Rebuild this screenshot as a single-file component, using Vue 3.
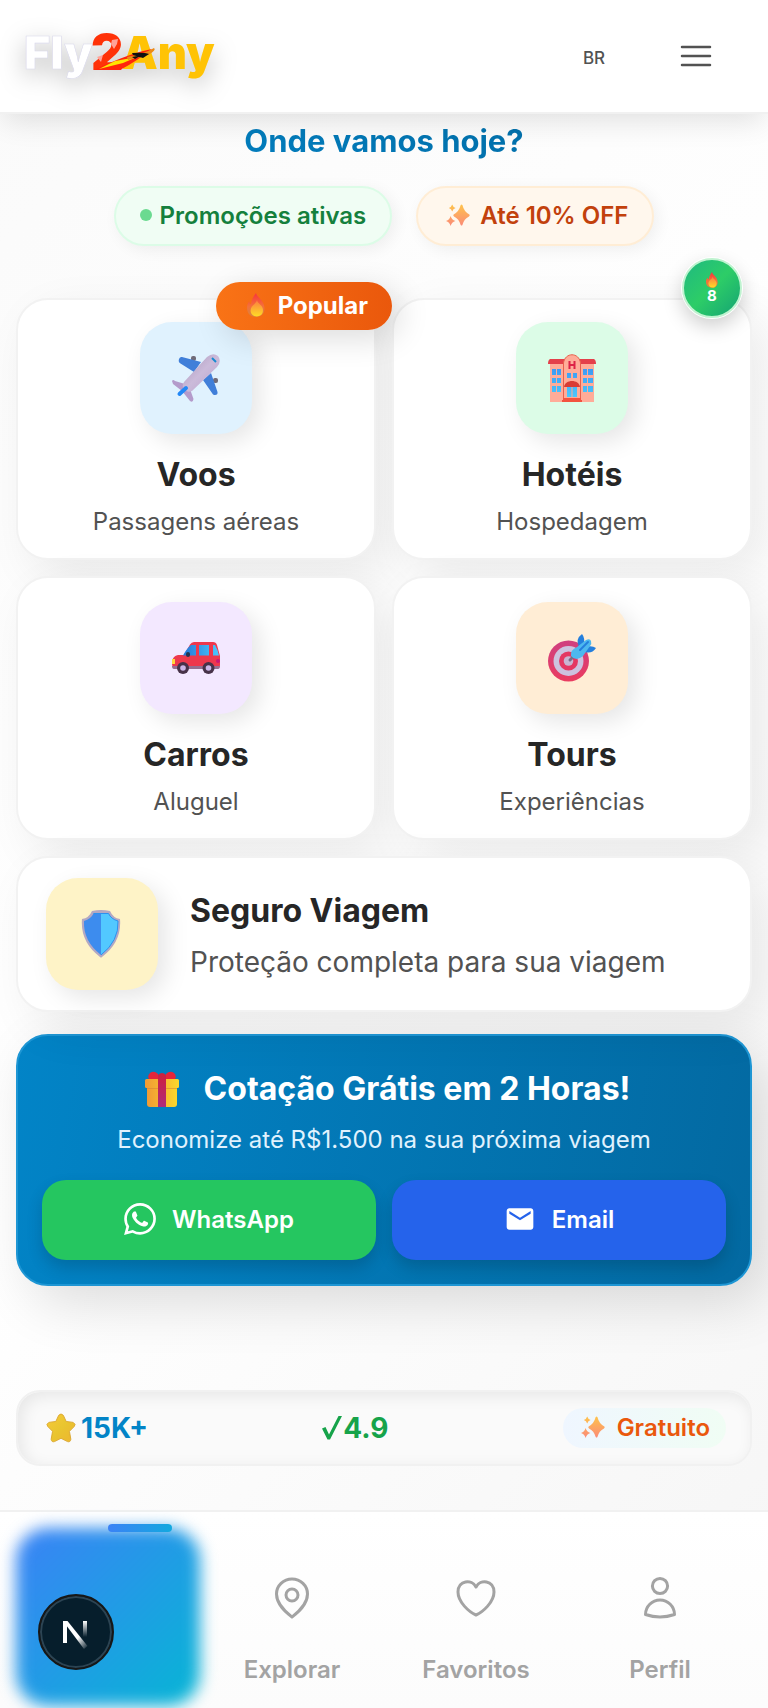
<script setup>
const services = [
  { id: 'plane', title: 'Voos', text: 'Passagens aéreas', tone: 'sky', lead: true },
  { id: 'hotel', title: 'Hotéis', text: 'Hospedagem', tone: 'mint', lead: true },
  { id: 'car', title: 'Carros', text: 'Aluguel', tone: 'lilac', lead: false },
  { id: 'target', title: 'Tours', text: 'Experiências', tone: 'peach', lead: false },
]
</script>

<template>
  <div class="page">
    <svg class="defs" aria-hidden="true">
      <defs>
        <linearGradient id="gSpark" x1="0" y1="0" x2="0" y2="1"><stop offset="0" stop-color="#fec34c" /><stop offset="1" stop-color="#fb8a78" /></linearGradient>
        <linearGradient id="gFlame" x1="0" y1="0" x2="0" y2="1"><stop offset="0" stop-color="#f8343c" /><stop offset="0.55" stop-color="#f4703a" /><stop offset="1" stop-color="#d9843e" /></linearGradient>
        <linearGradient id="gFlameIn" x1="0" y1="0" x2="0" y2="1"><stop offset="0" stop-color="#fb7b40" /><stop offset="1" stop-color="#ffdc26" /></linearGradient>
        <linearGradient id="gBody" x1="0" y1="0" x2="1" y2="1"><stop offset="0" stop-color="#a995b8" /><stop offset="0.5" stop-color="#cbbbda" /><stop offset="1" stop-color="#b9a2cc" /></linearGradient>
        <linearGradient id="gGlass" x1="0" y1="0" x2="1" y2="0"><stop offset="0" stop-color="#2477d8" /><stop offset="1" stop-color="#4cc9fd" /></linearGradient>
        <linearGradient id="gPane" x1="0" y1="0" x2="0" y2="1"><stop offset="0" stop-color="#3b9af5" /><stop offset="1" stop-color="#4cc8fb" /></linearGradient>
        <linearGradient id="gRing" x1="0" y1="0" x2="0" y2="1"><stop offset="0" stop-color="#cf3f80" /><stop offset="1" stop-color="#ea3c60" /></linearGradient>
        <linearGradient id="gBox" x1="0" y1="0" x2="1" y2="0"><stop offset="0" stop-color="#f09a35" /><stop offset="1" stop-color="#fcd72c" /></linearGradient>
        <linearGradient id="gRibbon" x1="0" y1="0" x2="0" y2="1"><stop offset="0" stop-color="#cf213c" /><stop offset="1" stop-color="#ae2b7c" /></linearGradient>
        <linearGradient id="gStar" x1="0" y1="0" x2="1" y2="1"><stop offset="0" stop-color="#f7c93a" /><stop offset="0.5" stop-color="#e9c52f" /><stop offset="1" stop-color="#edb52f" /></linearGradient>
        <linearGradient id="gDiag" x1="0" y1="0" x2="1" y2="1"><stop offset="0.6" stop-color="#fff" /><stop offset="1" stop-color="#fff" stop-opacity="0" /></linearGradient>
        <linearGradient id="gStem" x1="0" y1="0" x2="0" y2="1"><stop offset="0" stop-color="#fff" /><stop offset="1" stop-color="#fff" stop-opacity="0" /></linearGradient>
      </defs>
      <symbol id="sparkles" viewBox="0 0 24 24">
        <path fill="url(#gSpark)" d="M14.7 2Q15.6 1 16.4 2Q18 8.500 23 11.200Q24.4 12.3 23 13.400Q18 15.800 16.4 22Q15.6 23 14.7 22Q13 15.800 8 13.400Q6.600 12.3 8 11.200Q13 8.500 14.7 2ZM6.2 1.500Q7 4.200 9.600 5Q7 5.800 6.2 8.500Q5.400 5.800 2.800 5Q5.400 4.200 6.2 1.500ZM4.600 13Q5.700 16.800 9.400 18Q5.700 19.200 4.6 23Q3.600 19.200 0 18Q3.600 16.800 4.600 13Z" />
      </symbol>
      <symbol id="flame" viewBox="0 0 24 24">
        <path fill="url(#gFlame)" d="M12 0C13 5 20.500 7 20.500 15.500C20.500 20.8 17 23.8 12 23.8C6.500 23.8 3 20.6 3 14.8C3 11.800 4 9.800 5.400 8.200C5.400 10.400 6.200 11 7 11C7.500 7 9 4 12 0Z" />
        <path fill="url(#gFlameIn)" d="M13 6.800C13 10.600 19 12 19 17.200C19 21.400 16 23.400 12.800 23.400C9.300 23.400 6.600 21 6.600 17.400C6.600 14.300 8.600 12.800 10 11.400C11.500 10 12.600 9 13 6.800Z" />
      </symbol>
      <symbol id="plane" viewBox="0 0 48 48">
        <rect x="19" y="2" width="5" height="5" rx="2" fill="#706b78" /><rect x="41" y="24" width="5" height="5" rx="2" fill="#706b78" />
        <path fill="#407fd9" d="M10 3L29 8L22 18L8.500 9.500Q6 8 7 5Q8 2.500 10 3ZM39 19L45.500 38Q46 41 43 41Q41 41.500 40 39L31 26Z" />
        <path fill="#b49bcb" d="M0 27Q1 25 3 27L13 30L18 35L21.500 45Q21 49 18 47L10 37L1 30Z" />
        <path fill="url(#gBody)" d="M35 3Q41-2 46 2Q50 7 45 13L20 37Q16 39 13 36Q9 33 12 28Z" />
        <path stroke="#2388f6" stroke-width="4" stroke-linecap="round" d="M7.500 40L14 34" />
        <path fill="none" stroke="#168bd1" stroke-width="2" d="M40 4L44 8" />
      </symbol>
      <symbol id="hotel" viewBox="0 0 48 48">
        <path fill="#ffac99" d="M2 8H46V48H2Z" /><path fill="#e4404b" d="M2 5H46Q48 6 48 10H0Q0 6 2 5Z" />
        <path fill="#ffac99" stroke="#e8604d" stroke-width="1" d="M15.500 48V9C17-2 31-2 32.500 9V48Z" />
        <path stroke="#dd2347" stroke-width="2" d="M21.500 7V15M26.500 7V15M21.500 11H26.500" />
        <path fill="url(#gPane)" d="M4 15H8V21H4ZM9 15H13V21H9ZM35 15H39V21H35ZM40 15H45V21H40ZM4 24H8V29H4ZM9 24H13V29H9ZM35 24H39V29H35ZM40 24H45V29H40ZM4 32H8V38H4ZM9 32H13V38H9ZM35 32H39V38H35ZM40 32H45V38H40ZM19 19H23V24H19ZM25 19H29V24H25ZM19 33H23.500V43H19ZM24.500 33H29V43H24.500Z" />
        <path fill="#d93c35" d="M16 33C17 25 31 25 32 33Z" /><path fill="#f3533f" d="M15 44H33V46H34V48H14V46H15Z" />
      </symbol>
      <symbol id="car" viewBox="0 0 48 48">
        <path fill="#ee384d" d="M0 28Q1 21.500 6 21H12L18 10.500Q19.500 8 22 8H41Q44 8 45 11L48 22V31Q48 34 45 34H2Q0 33 0 30Z" />
        <path fill="url(#gGlass)" d="M11 21.500Q15 14 19 11H24V21.500ZM27 11H37V21.500H27ZM41 11H43Q46 16 47 21.500H41Z" />
        <path fill="#966f91" d="M0 32H48Q48 35 46 35H2Q0 35 0 32Z" />
        <path fill="#ffd83b" d="M0 25H3V30H0Z" /><rect x="14" y="18" width="4" height="5" rx="2" fill="#243553" /><circle cx="46" cy="27" r="2" fill="#ca1874" />
        <circle cx="11" cy="34" r="6" fill="#473249" /><circle cx="36.500" cy="34" r="6" fill="#473249" /><circle cx="11" cy="34" r="2.800" fill="#cbb6e7" /><circle cx="36.500" cy="34" r="2.800" fill="#cbb6e7" />
      </symbol>
      <symbol id="target" viewBox="0 0 48 48">
        <circle cx="20.500" cy="27" r="20.500" fill="url(#gRing)" /><circle cx="20.500" cy="27" r="15" fill="#cdc2df" /><circle cx="20.500" cy="27" r="9.500" fill="#e43762" /><circle cx="20.500" cy="27" r="4.800" fill="#c8b4d1" />
        <path stroke="#796b86" stroke-width="3" stroke-linecap="round" d="M22 26L27 21" />
        <path fill="#247fdd" d="M31 13Q27 5 34 0Q37 3 36 12ZM37 18Q44 20 48 14Q44 11 37 13Z" />
        <path fill="#4db8ef" d="M23 22Q22 16 29 13L38 6Q42 4 43 7Q44 10 42 12L35 22Q28 28 23 22Z" />
        <path stroke="#247fdd" stroke-width="2" stroke-linecap="round" d="M32 16L40 8" />
      </symbol>
      <symbol id="shield" viewBox="0 0 48 48">
        <path fill="#b3a8c3" d="M14 1Q23-1 32 1Q35 8 42 9Q44 32 24 47Q23 48 22 47Q2 32 4 9Q11 8 14 1Z" />
        <path fill="#3d8cee" d="M15.500 3.500H23V45Q5 31 6 11Q13 9 15.500 3.500Z" /><path fill="#52c8ff" d="M23 3.500H30.500Q33 9 40 11Q41 31 23 45Z" />
        <path fill="none" stroke="#2d91ef" stroke-width="1" d="M15.500 3.500H30.500Q33 9 40 11Q41 31 23 45" />
      </symbol>
      <symbol id="gift" viewBox="0 0 36 36">
        <path fill="url(#gBox)" d="M3 12H33V33Q33 36 30 36H6Q3 36 3 33Z" /><rect x="1" y="8" width="34" height="9" rx="1.500" fill="url(#gBox)" /><path stroke="#d98533" stroke-width="1" opacity=".6" d="M3 17.500H33" />
        <path fill="#e4263b" d="M5 8Q3 5 6 2Q10-1 14 3V8ZM31 8Q33 5 30 2Q26-1 22 3V8Z" /><path fill="url(#gRibbon)" d="M14 4Q18 0 22 4V36H14Z" />
      </symbol>
    </svg>

    <header class="topbar">
      <a href="#" class="logo" aria-label="Fly2Any">
        <svg viewBox="0 0 192 56">
          <g class="logo-text">
            <text x="0" y="41" fill="#fff" stroke="#d9d8ea" stroke-width="0.6">Fly</text>
            <text x="98" y="41" fill="#ffc305">Any</text>
            <text x="67" y="42" class="two">2</text>
          </g>
          <path fill="#ff260b" d="M70 42Q106 25 128 21Q113 33 96 42Z" /><path fill="#ffe500" d="M75 41L91 33L113 29L99 35Z" />
          <path fill="#ed8b15" d="M103 29Q120 26 130 20Q133 22 124 27L104 32Z" /><path fill="#111" d="M108 25Q120 24 125 26L119 30L109 27ZM108 29L118 27L111 31Z" />
          <path fill="#ffa298" d="M88 12L94 11L93 16L90 21L87 16ZM73 29L79 27L77 34Z" />
        </svg>
      </a>
      <div class="top-actions">
        <button type="button" class="lang">BR</button>
        <button type="button" class="menu" aria-label="Menu"><svg viewBox="0 0 32 24"><path fill="none" stroke="#525252" stroke-width="2.500" stroke-linecap="round" d="M2 3H30M2 12H30M2 21H30" /></svg></button>
      </div>
    </header>

    <main>
      <h1>Onde vamos hoje?</h1>
      <div class="pills">
        <span class="pill pill-green"><i class="dot"></i>Promoções ativas</span>
        <span class="pill pill-orange"><svg class="i24"><use href="#sparkles" /></svg>Até 10% OFF</span>
      </div>

      <div class="grid">
        <button v-for="s in services" :key="s.id" type="button" class="card" :class="{ lead: s.lead }">
          <span class="tile" :class="s.tone"><svg><use :href="'#' + s.id" /></svg></span>
          <span class="name">{{ s.title }}</span>
          <span class="sub">{{ s.text }}</span>
          <span v-if="s.id === 'plane'" class="popular"><svg class="i24"><use href="#flame" /></svg>Popular</span>
          <span v-if="s.id === 'hotel'" class="count"><svg><use href="#flame" /></svg>8</span>
        </button>
        <button type="button" class="card wide">
          <span class="tile cream"><svg><use href="#shield" /></svg></span>
          <span class="wide-text"><span class="name">Seguro Viagem</span><span class="sub">Proteção completa para sua viagem</span></span>
        </button>
      </div>

      <section class="cta">
        <h2><svg><use href="#gift" /></svg>Cotação Grátis em 2 Horas!</h2>
        <p>Economize até R$1.500 na sua próxima viagem</p>
        <div class="cta-actions">
          <a href="#" class="whats"><svg viewBox="0 0 24 24"><path fill="#fff" d="M17.472 14.382c-.297-.149-1.758-.867-2.03-.967-.273-.099-.471-.148-.67.15-.197.297-.767.966-.94 1.164-.173.199-.347.223-.644.075-.297-.15-1.255-.463-2.39-1.475-.883-.788-1.48-1.761-1.653-2.059-.173-.297-.018-.458.13-.606.134-.133.298-.347.446-.52.149-.174.198-.298.298-.497.099-.198.05-.371-.025-.52-.075-.149-.669-1.612-.916-2.207-.242-.579-.487-.5-.669-.51-.173-.008-.371-.01-.57-.01-.198 0-.52.074-.792.372-.272.297-1.04 1.016-1.04 2.479 0 1.462 1.065 2.875 1.213 3.074.149.198 2.096 3.2 5.077 4.487.709.306 1.262.489 1.694.625.712.227 1.36.195 1.871.118.571-.085 1.758-.719 2.006-1.413.248-.694.248-1.289.173-1.413-.074-.124-.272-.198-.57-.347m-5.421 7.403h-.004a9.87 9.87 0 01-5.031-1.378l-.361-.214-3.741.982.998-3.648-.235-.374a9.86 9.86 0 01-1.51-5.26c.001-5.45 4.436-9.884 9.888-9.884 2.64 0 5.122 1.03 6.988 2.898a9.825 9.825 0 012.893 6.994c-.003 5.45-4.437 9.884-9.885 9.884m8.413-18.297A11.815 11.815 0 0012.05 0C5.495 0 .16 5.335.157 11.892c0 2.096.547 4.142 1.588 5.945L.057 24l6.305-1.654a11.882 11.882 0 005.683 1.448h.005c6.554 0 11.89-5.335 11.893-11.893a11.821 11.821 0 00-3.48-8.413Z" /></svg>WhatsApp</a>
          <a href="#" class="mail"><svg viewBox="0 0 24 24"><path fill="#fff" d="M20 4H4c-1.100 0-1.990.9-1.990 2L2 18c0 1.100.9 2 2 2h16c1.100 0 2-.9 2-2V6c0-1.100-.9-2-2-2zm0 4l-8 5-8-5V6l8 5 8-5v2z" /></svg>Email</a>
        </div>
      </section>

      <section class="stats">
        <span class="stat blue"><svg class="star" viewBox="0 0 32 32"><path fill="url(#gStar)" stroke="#dba832" stroke-width="1" stroke-linejoin="round" d="M13.500 2.500Q16-.5 18.500 2.500L21.500 9L29 10Q32.500 12 30 14.500L25 19.500L26.500 28Q26 31.500 23 30.500L16 27L9 30.500Q6 31.500 5.500 28L7 19.500L2 14.500Q-.5 12 3 10L10.500 9Z" /></svg>15K+</span>
        <span class="stat green"><svg class="check" viewBox="0 0 20 24"><path fill="#16a34a" d="M0 12.500L3.500 11L7 18.500L16.500 0H20L8 23.500H5.500Z" /></svg>4.9</span>
        <span class="free"><svg class="i24"><use href="#sparkles" /></svg>Gratuito</span>
      </section>
    </main>

    <nav class="tabs" aria-label="Principal">
      <a href="#" class="tab active" aria-label="Início"><i class="marker"></i></a>
      <a href="#" class="tab"><svg viewBox="0 0 48 48"><path d="M24 43C19 39 8.500 31 8.500 20A15.500 15 0 0 1 39.500 20C39.500 31 29 39 24 43Z" /><circle cx="24" cy="21" r="6" /></svg>Explorar</a>
      <a href="#" class="tab"><svg viewBox="0 0 48 48"><path d="M24 41C17 38 6 28 6 18C6 6 20 5 24 13C28 5 42 6 42 18C42 28 31 38 24 41Z" /></svg>Favoritos</a>
      <a href="#" class="tab"><svg viewBox="0 0 48 48"><circle cx="24" cy="12" r="7.600" /><path d="M9.500 40.500A14.500 14.500 0 0 1 38.500 40.500Q24 45.500 9.500 40.500Z" /></svg>Perfil</a>
      <button type="button" class="dev" aria-label="Next.js">
        <svg viewBox="0 0 40 40"><path fill="#fff" d="M7 9H11V31H7Z" /><path fill="url(#gDiag)" d="M7 9H11.500L31.500 34L28 37Z" /><path fill="url(#gStem)" d="M27 9H31V25H27Z" /></svg>
      </button>
    </nav>
  </div>
</template>

<style>
body { margin: 0; }
</style>

<style scoped>
* { box-sizing: border-box; }
.page { min-height: 100vh; display: flex; flex-direction: column; overflow: hidden; font-family: Inter, "Liberation Sans", sans-serif; color: #262626; background: linear-gradient(135deg, #fafafa 0%, #fff 50%, #f5f5f5 100%); }
.defs { position: absolute; width: 0; height: 0; }
svg { display: block; flex: none; }
button { font: inherit; color: inherit; background: none; border: 0; padding: 0; margin: 0; }
a { color: inherit; text-decoration: none; }
.i24 { width: 24px; height: 24px; }

.topbar { position: relative; z-index: 3; height: 114px; padding: 0 40px 0 24px; display: flex; align-items: center; justify-content: space-between; background: #fff; border-bottom: 2px solid #f1f1f1; box-shadow: 0 10px 28px -4px rgba(0, 0, 0, .12); }
.logo svg { width: 192px; height: 56px; overflow: visible; filter: drop-shadow(0 8px 12px rgba(0, 0, 0, .25)); }
.logo-text { font-family: Inter, "Liberation Sans", sans-serif; font-size: 45px; font-weight: 900; }
.two { fill: #ff3208; font-size: 50px; font-weight: 900; }
.top-actions { display: flex; align-items: center; gap: 46px; }
.lang { width: 48px; height: 48px; padding-top: 4px; font-size: 17px; font-weight: 500; color: #525252; }
.menu { width: 64px; height: 48px; display: grid; place-items: center; }
.menu svg { width: 32px; height: 24px; }

main { padding: 6px 16px 42px; }
h1 { margin: 0; text-align: center; font-size: 31px; line-height: 42px; font-weight: 700; color: transparent; background: linear-gradient(90deg, #0284c7, #0369a1); background-clip: text; }
.pills { margin-top: 24px; display: flex; justify-content: center; gap: 24px; }
.pill { height: 60px; display: flex; align-items: center; border: 2px solid; border-radius: 30px; padding: 0 24px 2px; font-size: 24px; font-weight: 600; box-shadow: 4px 4px 16px rgba(0, 0, 0, .06); }
.pill-green { gap: 8px; color: #15803d; background: #f0fdf4; border-color: #dcfce7; }
.pill-orange { gap: 10px; padding-left: 28px; color: #c2410c; background: #fff7ed; border-color: #ffedd5; }
.dot { width: 12px; height: 12px; border-radius: 6px; background: #6bda90; }

.grid { margin-top: 52px; display: grid; grid-template-columns: 1fr 1fr; gap: 16px; }
.card { position: relative; display: flex; flex-direction: column; align-items: center; padding: 24px 16px 20px; border: 2px solid #f2f2f2; border-radius: 32px; background: #fff; box-shadow: 16px 16px 48px rgba(0, 0, 0, .08); }
.card.lead { padding-top: 22px; }
.tile { width: 112px; height: 112px; display: grid; place-items: center; border-radius: 32px; box-shadow: 8px 8px 24px rgba(0, 0, 0, .1); }
.tile svg { width: 48px; height: 48px; }
.sky { background: #e0f2fe; }
.mint { background: #dcfce7; }
.lilac { background: #f3e8ff; }
.peach { background: #ffedd5; }
.cream { background: #fef3c7; }
.name { margin-top: 20px; font-size: 32px; line-height: 42px; font-weight: 700; color: #262626; }
.sub { margin-top: 10px; font-size: 24px; line-height: 32px; font-weight: 400; color: #525252; }
.wide { grid-column: 1 / -1; flex-direction: row; gap: 32px; padding: 20px 28px; text-align: left; }
.wide-text { padding-top: 4px; display: flex; flex-direction: column; }
.wide .name { margin: 0; }
.wide .sub { font-size: 28px; line-height: 40px; }
.popular { position: absolute; z-index: 2; top: -18px; right: -18px; height: 48px; padding: 0 24px 2px 28px; display: flex; align-items: center; gap: 10px; border-radius: 24px; font-size: 24px; font-weight: 700; color: #fff; background: linear-gradient(90deg, #f97316, #ea580c); box-shadow: 8px 8px 32px rgba(0, 0, 0, .14); }
.count { position: absolute; z-index: 2; top: -42px; right: 8px; width: 60px; height: 60px; display: flex; flex-direction: column; align-items: center; justify-content: center; border: 2px solid #bff3d0; border-radius: 30px; font-size: 15px; line-height: 16px; font-weight: 700; color: #fff; background: linear-gradient(135deg, #1fb981, #2dcd67 50%, #14a374); box-shadow: 0 0 0 1px #fff, 0 8px 20px rgba(0, 0, 0, .2); }
.count svg { width: 16px; height: 16px; }

.cta { margin-top: 22px; padding: 32px 24px 24px; border: 2px solid #1e96d4; border-radius: 32px; color: #fff; background: linear-gradient(100deg, #0284c7, #0369a1); box-shadow: 16px 16px 56px rgba(0, 0, 0, .14); text-align: center; }
h2 { margin: 0; padding-left: 6px; display: flex; justify-content: center; align-items: center; gap: 24px; font-size: 32px; line-height: 42px; font-weight: 700; }
h2 svg { width: 36px; height: 36px; }
.cta p { margin: 14px 0 24px; font-size: 24px; line-height: 32px; color: #e0f2fe; }
.cta-actions { display: grid; grid-template-columns: 1fr 1fr; gap: 16px; }
.cta-actions a { height: 80px; padding-bottom: 2px; display: flex; align-items: center; justify-content: center; gap: 16px; border-radius: 24px; font-size: 24px; font-weight: 600; box-shadow: 0 8px 16px rgba(0, 0, 0, .16); }
.cta-actions svg { width: 32px; height: 32px; }
.whats { background: #25c660; }
.mail { background: #2563eb; }

.stats { margin-top: 104px; height: 76px; padding: 0 24px 0 28px; display: flex; align-items: center; justify-content: space-between; border: 2px solid #f1f1f1; border-radius: 24px; background: #fafafa; box-shadow: inset 4px 4px 16px rgba(0, 0, 0, .08); }
.stat { display: flex; align-items: center; gap: 5px; font-size: 28px; font-weight: 700; }
.star { width: 30px; height: 30px; }
.check { width: 20px; height: 24px; }
.blue { color: #0284c7; }
.green { gap: 1px; color: #16a34a; }
.free { height: 40px; padding: 0 16px 2px 18px; display: flex; align-items: center; gap: 12px; border-radius: 20px; font-size: 24px; font-weight: 600; color: #ea580c; background: linear-gradient(90deg, #eff6ff, #f0fdf4); }

.tabs { position: relative; margin-top: auto; padding: 16px 16px 2px; display: grid; grid-template-columns: repeat(4, 1fr); background: linear-gradient(#fff, #fcfcfc); border-top: 2px solid #f1f1f1; }
.tab { position: relative; height: 178px; padding-top: 46px; display: flex; flex-direction: column; align-items: center; gap: 32px; font-size: 24px; line-height: 32px; font-weight: 600; color: #a3a3a3; }
.tab svg { width: 48px; height: 48px; fill: none; stroke: #a3a3a3; stroke-width: 3; stroke-linejoin: round; }
.active::before { content: ""; position: absolute; inset: 0; border-radius: 32px; background: linear-gradient(135deg, #3b82f6, #06b6d4); filter: blur(8px); }
.marker { position: absolute; top: -4px; left: 50%; width: 64px; height: 8px; border-radius: 4px; background: linear-gradient(90deg, #3b82f6, #12a9df); }
.dev { position: absolute; left: 38px; bottom: 38px; width: 76px; height: 76px; display: grid; place-items: center; border: 2px solid #171717; border-radius: 38px; background: #061e2c; box-shadow: inset 0 0 0 2px #2c4453; }
.dev svg { width: 40px; height: 40px; }
</style>
